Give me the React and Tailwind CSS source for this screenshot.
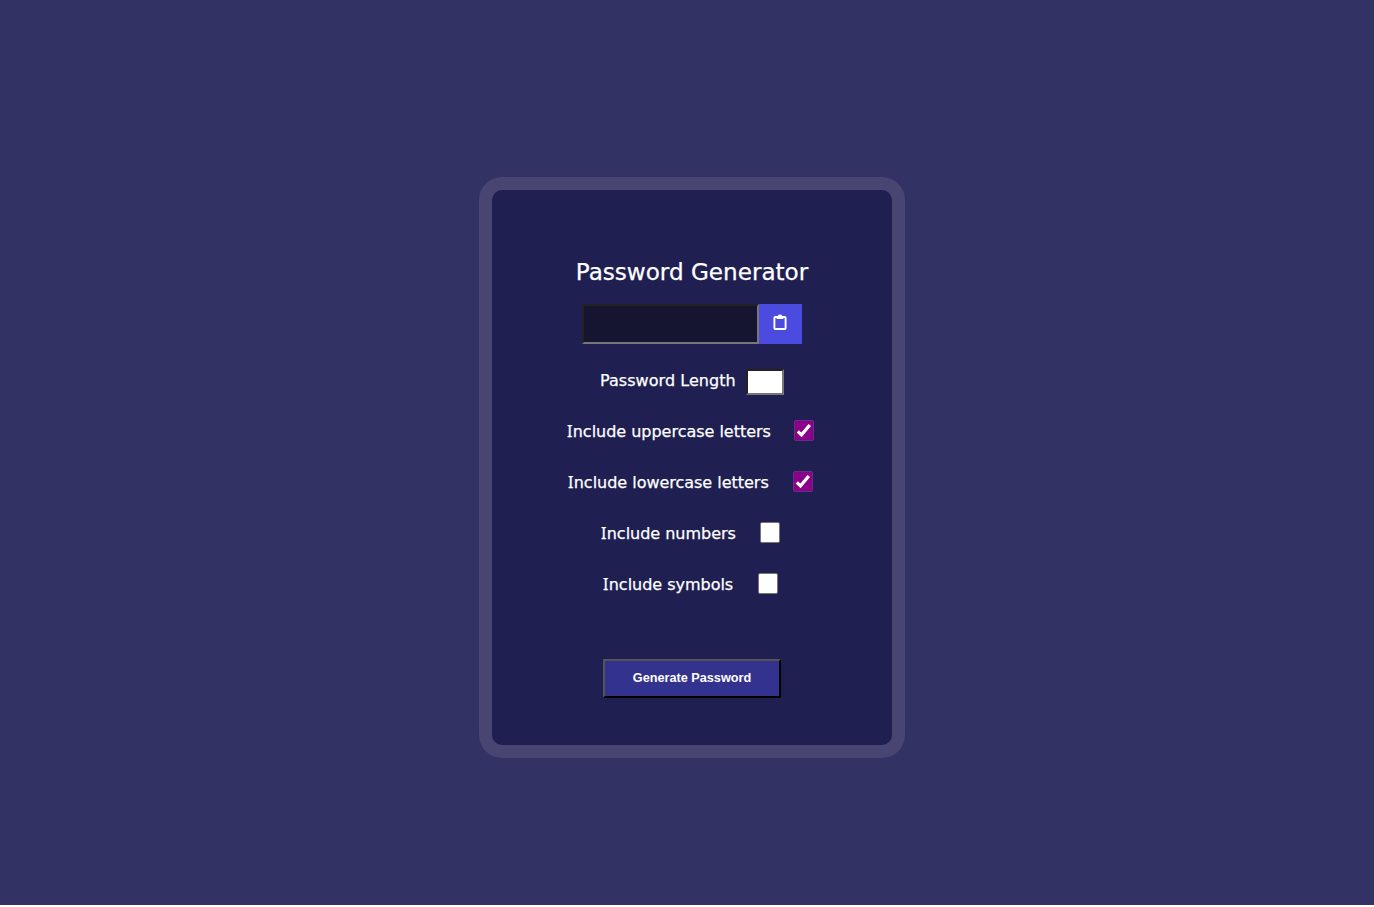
import React from "react";

function Option({ label, width, checked }) {
  return (
    <label className="flex h-[21px] items-center gap-[24px] pr-[4px]">
      <span className={`block whitespace-nowrap pl-px pt-[2px] tracking-[-0.02px] ${width}`}>
        <span className="font-['Noto_Sans'] tracking-[0.3px]">I</span>
        {label.slice(1)}
      </span>
      {checked ? (
        <span className="flex h-[21px] w-5 items-center justify-center rounded-[2px] border border-[#66307f] bg-[#8b008b]">
          <svg width="16" height="16" viewBox="0 0 16 16" fill="none">
            <path d="M1.8 8.4 L5.5 11.9 L13.8 2" stroke="white" strokeWidth="3.2" />
          </svg>
        </span>
      ) : (
        <span className="h-[21px] w-5 rounded-[2px] border border-[#767676] bg-white" />
      )}
    </label>
  );
}

export default function App() {
  return (
    <div className="h-[907px] bg-white font-['DejaVu_Sans',sans-serif] text-white">
      <div className="h-[905px] bg-[#333264] pl-[479px] pt-[177px]">
        <main className="h-[581px] w-[426px] rounded-[23px] bg-[#484572] p-[13px]">
          <div className="flex h-[555px] flex-col items-center rounded-[10px] bg-[#201f51] pt-[64px]">
            <h1 className="h-[50px] whitespace-nowrap text-[23.1px] leading-[36px] [-webkit-text-stroke:0.25px_white]">Password Generator</h1>
            <div className="flex h-10 w-[220px]">
              <div className="w-[177px] border-2 border-b-[#767676] border-l-[#222] border-r-[#767676] border-t-[#222] bg-[#151431]" />
              <button className="flex w-[43px] justify-center bg-[#4b4be0] pr-px pt-[9px]">
                <svg width="16" height="18" viewBox="0 0 16 18" fill="none">
                  <rect x="2.4" y="4" width="11.2" height="12" rx="0.9" stroke="white" strokeWidth="1.9" />
                  <path d="M4.6 3.1H5.8a2.3 2.1 0 0 1 4.4 0H11.4V6H4.6Z" fill="white" />
                </svg>
              </button>
            </div>
            <div className="flex flex-col items-center text-[16px] leading-[21px] [-webkit-text-stroke:0.25px_white]">
              <div className="mt-[25px] flex h-[26px] w-[184px] justify-between">
                <span className="whitespace-nowrap pt-px tracking-[0.05px]">Password Length</span>
                <span className="h-[26px] w-[38px] border-2 border-b-[#767676] border-l-[#222] border-r-[#767676] border-t-[#222] bg-white" />
              </div>
              <div className="mt-[25px] flex flex-col items-center gap-[30px]">
                <Option label="Include uppercase letters" width="w-[204px]" checked />
                <Option label="Include lowercase letters" width="w-[202px]" checked />
                <Option label="Include numbers" width="w-[136px]" />
                <Option label="Include symbols" width="w-[132px]" />
              </div>
            </div>
            <button className="mt-[65px] h-[39px] w-[178px] border-2 border-b-black border-l-[#555] border-r-black border-t-[#555] bg-[#33328e] pt-px font-['Liberation_Sans',sans-serif] text-[12.7px] font-bold">
              Generate Password
            </button>
          </div>
        </main>
      </div>
    </div>
  );
}
